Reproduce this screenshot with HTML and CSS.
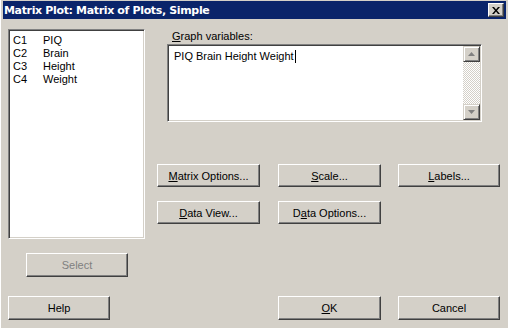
FILE: index.html
```html
<!DOCTYPE html>
<html>

<head>
    <title>Matrix Plot: Matrix of Plots, Simple</title>
    <link rel="stylesheet" href="styles.css">
</head>

<body>
    <div class="window">
        <div class="titlebar">
            <span class="title">Matrix Plot: Matrix of Plots, Simple</span>
            <span class="close">
                <svg width="8" height="7" viewBox="0 0 8 7">
                    <path d="M0 0h2l2 2.5 2-2.5h2l-3 3.5 3 3.5h-2l-2-2.5-2 2.5h-2l3-3.5z" fill="#000" />
                </svg>
            </span>
        </div>

        <div class="main">
            <div class="left">
                <div class="listbox">
                    <div class="row"><span class="col">C1</span><span>PIQ</span></div>
                    <div class="row"><span class="col">C2</span><span>Brain</span></div>
                    <div class="row"><span class="col">C3</span><span>Height</span></div>
                    <div class="row"><span class="col">C4</span><span>Weight</span></div>
                </div>
                <button class="btn btn-select" disabled>Select</button>
            </div>

            <div class="right">
                <div class="field">
                    <div class="label"><u>G</u>raph variables:</div>
                    <div class="textbox">
                        <div class="textbox-text">PIQ Brain Height Weight<span class="caret"></span></div>
                        <div class="scrollbar">
                            <div class="sb-btn">
                                <svg width="7" height="4" viewBox="0 0 7 4">
                                    <path d="M3.5 0 7 4H0z" fill="#808080" />
                                </svg>
                            </div>
                            <div class="sb-track"></div>
                            <div class="sb-btn">
                                <svg width="7" height="4" viewBox="0 0 7 4">
                                    <path d="M0 0h7L3.5 4z" fill="#808080" />
                                </svg>
                            </div>
                        </div>
                    </div>
                </div>

                <div class="btn-row">
                    <button class="btn"><u>M</u>atrix Options...</button>
                    <button class="btn"><u>S</u>cale...</button>
                    <button class="btn btn-narrow"><u>L</u>abels...</button>
                </div>
                <div class="btn-row">
                    <button class="btn"><u>D</u>ata View...</button>
                    <button class="btn">D<u>a</u>ta Options...</button>
                </div>
            </div>
        </div>

        <div class="footer">
            <button class="btn btn-help">Help</button>
            <button class="btn"><u>O</u>K</button>
            <button class="btn btn-narrow">Cancel</button>
        </div>
    </div>
</body>

</html>
```

FILE: styles.css
```css
body {
    margin: 0;
    background: #d4d0c8;
    font-family: "Liberation Sans", Arial, sans-serif;
    font-size: 11px;
    color: #000;
}

.window {
    width: 508px;
    height: 328px;
    box-sizing: border-box;
    padding: 1px 2px 0 2px;
    border-left: 1px solid #fff;
}

.titlebar {
    height: 18px;
    background: #0a246a;
    display: flex;
    align-items: center;
    justify-content: space-between;
    padding: 0 2px 0 1px;
}

.title {
    color: #fff;
    font-family: "DejaVu Sans", Verdana, sans-serif;
    font-weight: bold;
    font-size: 11px;
    letter-spacing: -0.35px;
}

.close {
    width: 14px;
    height: 12px;
    background: #d4d0c8;
    border: 1px solid;
    border-color: #fff #404040 #404040 #fff;
    box-shadow: inset -1px -1px #808080;
    display: flex;
    align-items: center;
    justify-content: center;
}

.main {
    display: flex;
    padding: 10px 0 0 5px;
}

.left {
    width: 137px;
    display: flex;
    flex-direction: column;
}

.listbox {
    height: 210px;
    box-sizing: border-box;
    background: #fff;
    border: 1px solid;
    border-color: #808080 #fff #fff #808080;
    box-shadow: inset 1px 1px #404040, inset -1px -1px #d4d0c8;
    padding: 4px 0 0 4px;
}

.row {
    height: 13px;
    line-height: 13px;
    display: flex;
}

.col {
    width: 30px;
}

.btn {
    width: 103px;
    height: 23px;
    padding: 0;
    background: #d4d0c8;
    font-family: "Liberation Sans", Arial, sans-serif;
    font-size: 11px;
    color: #000;
    border: 1px solid;
    border-color: #fff #404040 #404040 #fff;
    box-shadow: inset -1px -1px #808080;
}

.btn-narrow {
    width: 102px;
}

.btn-select {
    width: 102px;
    height: 24px;
    margin: 14px 0 0 18px;
    color: #808080;
}

.right {
    flex: 1;
    margin-left: 12px;
}

.field {
    padding-left: 10px;
}

.label {
    margin: 1px 0 0 5px;
    height: 14px;
}

.textbox {
    width: 315px;
    height: 78px;
    box-sizing: border-box;
    background: #fff;
    border: 1px solid;
    border-color: #808080 #fff #fff #808080;
    box-shadow: inset 1px 1px #404040, inset -1px -1px #d4d0c8;
    display: flex;
    justify-content: space-between;
    padding: 1px;
}

.textbox-text {
    padding: 4px 0 0 5px;
    height: 13px;
    line-height: 13px;
    display: flex;
    align-items: center;
}

.caret {
    width: 1px;
    height: 13px;
    background: #000;
    margin-left: 1px;
}

.scrollbar {
    width: 17px;
    display: flex;
    flex-direction: column;
}

.sb-btn {
    height: 16px;
    box-sizing: border-box;
    background: #d4d0c8;
    border: 1px solid;
    border-color: #d4d0c8 #404040 #404040 #d4d0c8;
    box-shadow: inset 1px 1px #fff, inset -1px -1px #808080;
    display: flex;
    align-items: center;
    justify-content: center;
}

.sb-track {
    flex: 1;
    background-color: #fff;
    background-image: conic-gradient(#d4d0c8 25%, #fff 0 50%, #d4d0c8 0 75%, #fff 0);
    background-size: 2px 2px;
}

.btn-row {
    display: flex;
    gap: 18px;
    margin-top: 42px;
}

.btn-row + .btn-row {
    margin-top: 14px;
}

.btn-row .btn-narrow {
    margin-left: -1px;
}

.footer {
    display: flex;
    padding: 19px 0 0 5px;
}

.footer .btn {
    height: 24px;
}

.btn-help {
    width: 102px;
    margin-right: 168px;
}

.footer .btn-narrow {
    margin-left: 17px;
}
```
